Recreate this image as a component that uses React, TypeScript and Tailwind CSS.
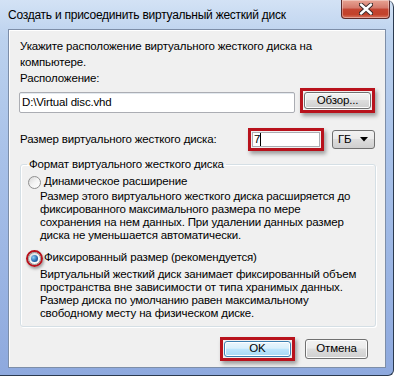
import React from 'react';

const font = { fontFamily: '"Segoe UI", "Liberation Sans", Arial, sans-serif' };

const Radio = ({ checked }: { checked?: boolean }) => (
  <span className="relative flex h-[13px] w-[13px] shrink-0 items-center justify-center rounded-full border border-[#8f8f8f] bg-gradient-to-br from-[#d6d6d6] via-[#f4f4f4] to-[#ffffff]">
    {checked && (
      <span className="h-[7px] w-[7px] rounded-full bg-[radial-gradient(circle_at_35%_35%,#8fd0f5,#2a6fb5_55%,#0c3770)]" />
    )}
  </span>
);

const WinButton = ({ children, def }: { children: React.ReactNode; def?: boolean }) => (
  <button
    className={
      def
        ? 'flex h-full w-full items-center justify-center rounded-[3px] border border-[#3c7fb1] bg-[linear-gradient(#eaf6fd_0%,#d9f0fc_45%,#bee6fd_50%,#a7d9f5_100%)] text-black shadow-[inset_0_0_0_1px_#fff]'
        : 'flex h-full w-full items-center justify-center rounded-[3px] border border-[#707070] bg-[linear-gradient(#f2f2f2_0%,#ebebeb_45%,#dddddd_50%,#cfcfcf_100%)] text-black shadow-[inset_0_0_0_1px_#fcfcfc]'
    }
  >
    {children}
  </button>
);

const Highlight = ({ children, className }: { children: React.ReactNode; className: string }) => (
  <div className={'shrink-0 border-[3px] border-[#b8121c] p-[1px] shadow-[2px_3px_4px_rgba(0,0,0,0.35)] ' + className}>
    {children}
  </div>
);

export default function App() {
  return (
    <div
      className="flex h-[376px] w-[394px] flex-col overflow-hidden rounded-br-[6px] rounded-tr-[7px] border-b border-r border-[#2b3a4f] bg-[linear-gradient(180deg,#d3e2f5_0%,#bcd2ee_10%,#a9c2e9_40%,#8ea9de_100%)] text-[11.5px] tracking-[-0.15px] text-black"
      style={font}
    >
      {/* title bar */}
      <div className="relative flex h-[29px] shrink-0 items-start pl-[8px] pt-[7px]">
        <span className="text-[12px] leading-[16px] tracking-[-0.25px] text-black">Создать и присоединить виртуальный жесткий диск</span>
        <div className="absolute right-[3px] top-0 flex h-[19px] w-[49px] items-center justify-center rounded-b-[4px] border border-t-0 border-[#5c2b2b] bg-[linear-gradient(#e8a494_0%,#d4796b_45%,#c44533_50%,#c2422b_80%,#d97763_100%)] shadow-[inset_0_0_0_1px_rgba(255,255,255,0.35)]">
          <svg width="14" height="12" viewBox="0 0 14 12">
            <path d="M2 1.5 L12 10.5 M12 1.5 L2 10.5" stroke="#3a2a2a" strokeWidth="4.4" strokeLinecap="round" />
            <path d="M2 1.5 L12 10.5 M12 1.5 L2 10.5" stroke="#ffffff" strokeWidth="2.4" strokeLinecap="round" />
          </svg>
        </div>
      </div>

      {/* body */}
      <div className="flex h-[339px] shrink-0 pl-[8px]">
        <div className="flex h-full w-[378px] flex-col border border-[#7d8ea8] bg-[#f0f0f0] shadow-[inset_1px_1px_0_#ffffff]">
          <p className="whitespace-nowrap pl-[11px] pt-[8px] leading-[16px]">
            Укажите расположение виртуального жесткого диска на
            <br />
            компьютере.
          </p>
          <p className="pl-[11px] leading-[16px]">Расположение:</p>

          <div className="mt-[2px] flex items-end gap-[5px] pl-[10px] pr-[10px]">
            <div className="flex h-[21px] w-[276px] items-center rounded-[2px] border border-[#abadb3] bg-white pl-[2px] shadow-[inset_0_1px_0_#e3e9ef]">
              D:\Virtual disc.vhd
            </div>
            <Highlight className="h-[25px] w-[75px]">
              <WinButton>Обзор...</WinButton>
            </Highlight>
          </div>

          <div className="mt-[15px] flex h-[23px] items-center pl-[11px] pr-[10px]">
            <span className="flex-1 whitespace-nowrap">Размер виртуального жесткого диска:</span>
            <Highlight className="h-[23px] w-[76px]">
              <div className="flex h-full w-full items-center border border-[#abadb3] bg-white pl-[1px]">
                7<span className="h-[13px] w-px bg-black" />
              </div>
            </Highlight>
            <div className="ml-[8px] flex h-[19px] w-[43px] items-center justify-between rounded-[3px] border border-[#707070] bg-[linear-gradient(#f2f2f2_0%,#ebebeb_45%,#dddddd_50%,#cfcfcf_100%)] pl-[5px] pr-[6px]">
              <span>ГБ</span>
              <svg width="8" height="5" viewBox="0 0 8 5">
                <path d="M0 0 H8 L4 4.5 Z" fill="#000" />
              </svg>
            </div>
          </div>

          <fieldset className="ml-[11px] mt-[5px] w-[356px] rounded-[3px] border border-[#d5dfe5] px-[6px] pb-[6px] shadow-[inset_1px_1px_0_#ffffff,1px_1px_0_#ffffff]">
            <legend className="px-[2px] leading-[16px]">Формат виртуального жесткого диска</legend>
            <div className="mt-[2px] flex h-[16px] items-center gap-[3px] pl-[1px]">
              <Radio />
              <span>Динамическое расширение</span>
            </div>
            <p className="whitespace-nowrap pl-[13px] leading-[13px]">
              Размер этого виртуального жесткого диска расширяется до
              <br />
              фиксированного максимального размера по мере
              <br />
              сохранения на нем данных. При удалении данных размер
              <br />
              диска не уменьшается автоматически.
            </p>
            <div className="mt-[8px] flex h-[16px] items-center gap-[3px] pl-[1px]">
              <span className="-ml-[2px] -mr-[2px] flex h-[17px] w-[17px] shrink-0 items-center justify-center rounded-full border-2 border-[#b8121c] shadow-[1px_2px_3px_rgba(0,0,0,0.35)]">
                <Radio checked />
              </span>
              <span>Фиксированный размер (рекомендуется)</span>
            </div>
            <p className="mt-[2px] whitespace-nowrap pl-[13px] leading-[13px]">
              Виртуальный жесткий диск занимает фиксированный объем
              <br />
              пространства вне зависимости от типа хранимых данных.
              <br />
              Размер диска по умолчанию равен максимальному
              <br />
              свободному месту на физическом диске.
            </p>
          </fieldset>

          <div className="mt-[10px] flex items-center justify-end gap-[10px] pr-[17px]">
            <Highlight className="h-[24px] w-[75px]">
              <WinButton def>OK</WinButton>
            </Highlight>
            <div className="h-[20px] w-[63px]">
              <WinButton>Отмена</WinButton>
            </div>
          </div>
        </div>
      </div>
    </div>
  );
}
